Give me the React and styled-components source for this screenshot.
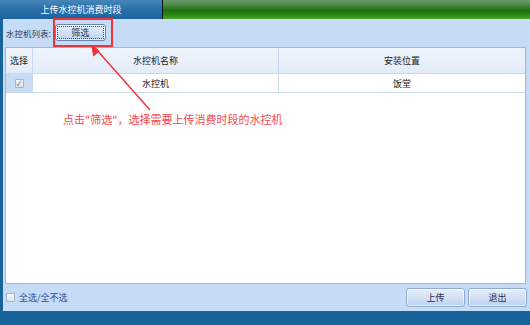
import React from 'react';
import styled, { createGlobalStyle } from 'styled-components';

const Global = createGlobalStyle`
  html, body { margin: 0; padding: 0; }
  body {
    font-family: "Noto Sans CJK SC", "Liberation Sans", sans-serif;
    font-size: 9px;
  }
`;

const Frame = styled.div`
  width: 530px;
  height: 325px;
  display: flex;
  flex-direction: column;
  background: #17639a;
  position: relative;
  overflow: hidden;
`;

const TitleBar = styled.div`
  height: 19px;
  display: flex;
`;

const Tab = styled.div`
  width: 162px;
  background: linear-gradient(#4886b8, #2a71ab 45%, #1c64a0);
  color: #fff;
  display: flex;
  align-items: center;
  justify-content: center;
  font-size: 9px;
  border-right: 1px solid #0b1a10;
`;

const Green = styled.div`
  flex: 1;
  background: linear-gradient(#6a986a, #4c8a48 25%, #1c6e0c 55%, #2a8a12 80%, #4aa22e);
`;

const Body = styled.div`
  flex: 1;
  margin: 0 0 14px 3px;
  background: #c6dbf6;
  display: flex;
  flex-direction: column;
  padding: 0 4px 0 2px;
`;

const Toolbar = styled.div`
  height: 28px;
  display: flex;
  align-items: center;
  gap: 4px;
  color: #2a3a5a;
  padding-left: 1px;
  padding-bottom: 1px;
  box-sizing: border-box;
`;

const Label = styled.span`
  font-size: 8.5px;
`;

const Button = styled.button`
  width: ${(p) => p.$w || 59}px;
  height: ${(p) => p.$h || 19}px;
  padding: 0;
  font-family: inherit;
  font-size: 9px;
  color: #1c2e58;
  border: 1px solid #8eaad0;
  border-radius: 3px;
  background: linear-gradient(#e6eefb, #d2e1f5 50%, #bcd2ef);
  display: flex;
  align-items: center;
  justify-content: center;
  box-shadow: inset 0 0 0 1px rgba(255,255,255,0.6);
  ${(p) => p.$focus && `
    outline: 1px dotted #3c4c6c;
    outline-offset: -3px;
    border-color: #6a86b0;
  `}
`;

const Table = styled.div`
  flex: 1;
  background: #fff;
  border: 1px solid #9fb8d8;
  display: flex;
  flex-direction: column;
`;

const Row = styled.div`
  display: grid;
  grid-template-columns: 27px 246px 1fr;
  height: ${(p) => p.$h}px;
  background: ${(p) => (p.$head ? 'linear-gradient(#eef4fc, #e2ecf9)' : '#fff')};
  border-bottom: 1px solid #c9d8ec;
`;

const Cell = styled.div`
  display: flex;
  align-items: center;
  justify-content: center;
  color: #222;
  font-size: 9px;
  border-right: 1px solid #c9d8ec;
  background: ${(p) => p.$bg || 'transparent'};
  &:last-child { border-right: none; }
`;

const Check = styled.span`
  width: 7px;
  height: 7px;
  border: 1px solid #a8b4c4;
  background: linear-gradient(#f4f6f9, #dde3ea);
  border-radius: 1px;
  display: inline-flex;
  align-items: center;
  justify-content: center;
  font-size: 7px;
  line-height: 1;
  color: #5a6a88;
`;

const Footer = styled.div`
  height: 27px;
  display: flex;
  align-items: center;
  padding-left: 1px;
  gap: 4px;
  color: #2e4c8c;
`;

const Spacer = styled.div`
  flex: 1;
`;

const Buttons = styled.div`
  display: flex;
  gap: 3px;
  margin-right: -1px;
`;

const Highlight = styled.div`
  position: absolute;
  left: 53px;
  top: 18px;
  width: 56px;
  height: 25px;
  border: 2px solid #f0333a;
`;

const Note = styled.div`
  position: absolute;
  left: 63px;
  top: 111px;
  color: #f2474c;
  font-size: 11px;
  white-space: nowrap;
`;

const Arrow = styled.svg`
  position: absolute;
  left: 0;
  top: 0;
  pointer-events: none;
`;

export default function App() {
  return (
    <Frame>
      <Global />
      <TitleBar>
        <Tab>上传水控机消费时段</Tab>
        <Green />
      </TitleBar>
      <Body>
        <Toolbar>
          <Label>水控机列表:</Label>
          <Button $w={51} $h={17} $focus>筛选</Button>
        </Toolbar>
        <Table>
          <Row $head $h={25}>
            <Cell>选择</Cell>
            <Cell>水控机名称</Cell>
            <Cell>安装位置</Cell>
          </Row>
          <Row $h={18}>
            <Cell $bg="#c9dcf4"><Check>✓</Check></Cell>
            <Cell>水控机</Cell>
            <Cell>饭堂</Cell>
          </Row>
        </Table>
        <Footer>
          <Check />
          <span>全选/全不选</span>
          <Spacer />
          <Buttons>
            <Button $w={59}>上传</Button>
            <Button $w={59}>退出</Button>
          </Buttons>
        </Footer>
      </Body>
      <Highlight />
      <Arrow width="530" height="325" viewBox="0 0 530 325">
        <line x1="150" y1="110" x2="96" y2="49" stroke="#f0333a" strokeWidth="1.5" />
        <path d="M92 45 L93.5 56 L99 51 Z" fill="#f0333a" stroke="#f0333a" strokeWidth="1" />
      </Arrow>
      <Note>点击"筛选"，选择需要上传消费时段的水控机</Note>
    </Frame>
  );
}
